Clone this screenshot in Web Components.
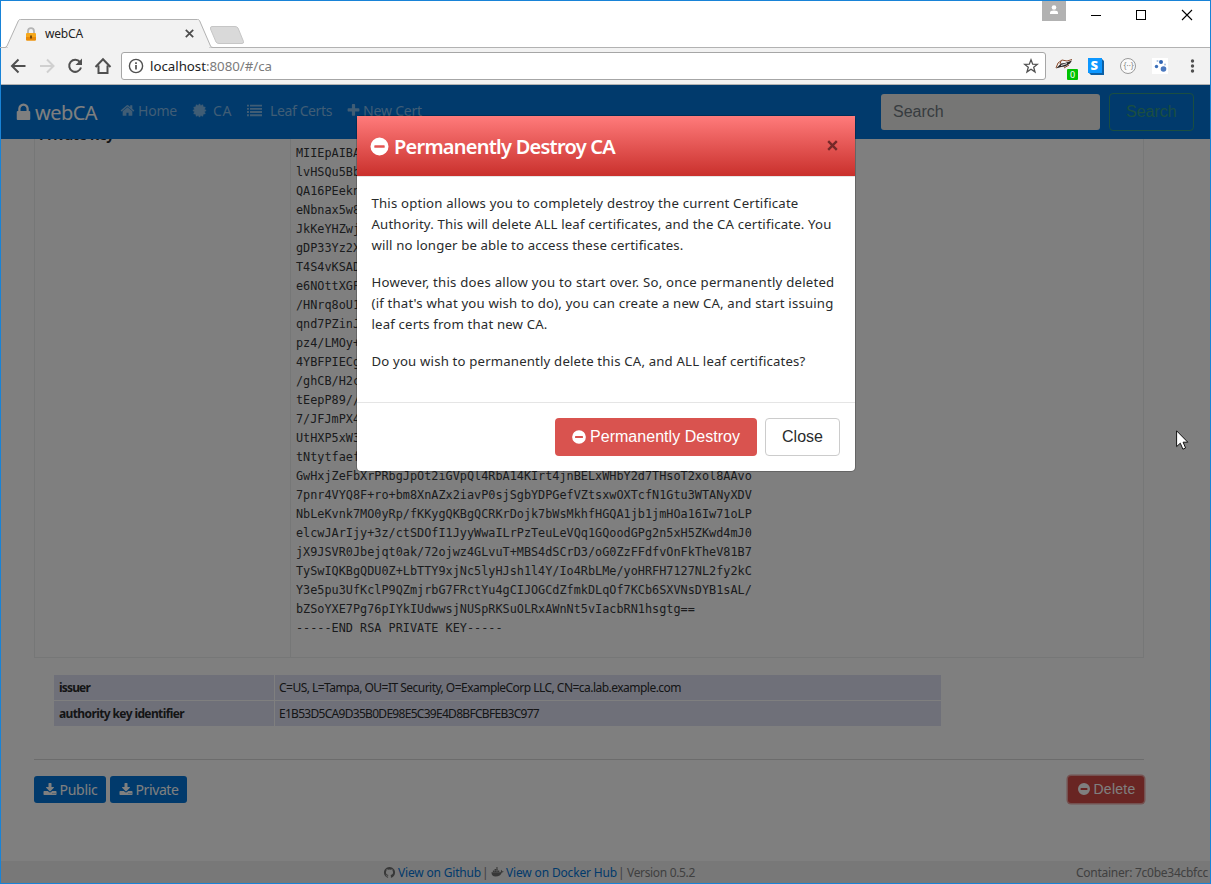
<!DOCTYPE html>
<html lang="en">
<head>
<meta charset="utf-8">
<title>webCA</title>
<style>
html,body{margin:0;height:100%;overflow:hidden;background:#fff}
body{font-family:"Noto Sans","Open Sans",sans-serif;font-size:14px;color:#292b2c}
</style>
</head>
<body>
<browser-window></browser-window>
<script>
const part = (name, html, hook) => customElements.define(name, class extends HTMLElement {
  connectedCallback() {
    if (this.shadowRoot) return;
    const t = document.createElement('template');
    t.innerHTML = html;
    this.attachShadow({mode: 'open'}).append(t.content.cloneNode(true));
    if (hook) hook(this, this.shadowRoot);
  }
});

const burst = (() => {
  let p = [];
  for (let i = 0; i < 24; i++) {
    const a = i * Math.PI / 12, r = i % 2 ? 620 : 800;
    p.push((896 + r * Math.cos(a)).toFixed(0) + ',' + (896 + r * Math.sin(a)).toFixed(0));
  }
  return '<polygon stroke="currentColor" stroke-width="60" stroke-linejoin="round" points="' + p.join(' ') + '"/>';
})();

const ICONS = {
  home: '<path d="M1472 992v480q0 26-19 45t-45 19h-384v-384h-256v384h-384q-26 0-45-19t-19-45v-480q0-1 .5-3t.5-3l575-474 575 474q1 2 1 6zm223-69l-62 74q-8 9-21 11h-3q-13 0-21-7l-692-577-692 577q-12 8-24 7-13-2-21-11l-62-74q-8-10-7-23.5t11-21.5l719-599q32-26 76-26t76 26l244 204v-195q0-14 9-23t23-9h192q14 0 23 9t9 23v408l219 182q10 8 11 21.5t-7 23.5z"/>',
  lock: '<path d="M640 768h512v-192q0-106-75-181t-181-75-181 75-75 181v192zm832 96v576q0 40-28 68t-68 28h-960q-40 0-68-28t-28-68v-576q0-40 28-68t68-28h32v-192q0-184 132-316t316-132 316 132 132 316v192h32q40 0 68 28t28 68z"/>',
  plus: '<path d="M1600 736v192q0 40-28 68t-68 28h-416v416q0 40-28 68t-68 28h-192q-40 0-68-28t-28-68v-416h-416q-40 0-68-28t-28-68v-192q0-40 28-68t68-28h416v-416q0-40 28-68t68-28h192q40 0 68 28t28 68v416h416q40 0 68 28t28 68z"/>',
  minus: '<path fill-rule="evenodd" d="M896 128a768 768 0 1 0 0 1536a768 768 0 1 0 0-1536zM512 780h768q60 0 60 60v112q0 60-60 60h-768q-60 0-60-60v-112q0-60 60-60z"/>',
  download: '<path d="M1344 1344q0-26-19-45t-45-19-45 19-19 45 19 45 45 19 45-19 19-45zm256 0q0-26-19-45t-45-19-45 19-19 45 19 45 45 19 45-19 19-45zm128-224v320q0 40-28 68t-68 28h-1472q-40 0-68-28t-28-68v-320q0-40 28-68t68-28h465l135 136q58 56 136 56t136-56l136-136h464q40 0 68 28t28 68zm-325-569q17 41-14 70l-448 448q-18 19-45 19t-45-19l-448-448q-31-29-14-70 17-39 59-39h256v-448q0-26 19-45t45-19h256q26 0 45 19t19 45v448h256q42 0 59 39z"/>',
  github: '<path d="M896 128q209 0 385.5 103t279.5 279.5 103 385.5q0 251-146.5 451.5t-378.5 277.5q-27 5-40-7t-13-30q0-3 .5-76.5t.5-134.5q0-97-52-142 57-6 102.5-18t94-39 81-66.5 53-105 20.5-150.5q0-119-79-206 37-91-8-204-28-9-81 11t-92 44l-38 24q-93-26-192-26t-192 26q-16-11-42.5-27t-83.5-38.5-85-13.5q-45 113-8 204-79 87-79 206 0 85 20.5 150t52.5 105 80.5 67 94 39 102.5 18q-39 36-49 103-21 10-45 15t-57 5-65.5-21.5-55.5-62.5q-19-32-48.5-52t-49.5-24l-20-3q-21 0-29 4.5t-5 11.5 9 14 13 12l7 5q22 10 43.5 38t31.5 51l10 23q13 38 44 61.5t67 30 69.5 7 55.5-3.5l23-4q0 38 .5 88.5t.5 54.5q0 18-13 30t-40 7q-232-77-378.5-277.5t-146.5-451.5q0-209 103-385.5t279.5-279.5 385.5-103z"/>',
  docker: '<path d="M60 850H1300q90-40 60-190q-10-70 50-130q110 80 110 190q150-40 240 40q-80 150-270 150q-180 540-850 540Q80 1450 60 850zM260 620h200v190H260zM490 620h200v190H490zM720 620h200v190H720zM950 620h200v190H950zM490 400h200v190H490zM720 400h200v190H720zM720 180h200v190H720z"/>',
  cert: burst,
  list: [200, 584, 968, 1352].map(y => `<path d="M0 ${y}h230v220H0zM360 ${y}h1432v220H360z"/>`).join('')
};

part('browser-window', `
<style>
:host{display:flex;flex-direction:column;box-sizing:border-box;width:1211px;height:884px;border:1px solid #1883d7;background:#fff;position:relative}
browser-page{flex:1;min-height:0}
.cursor{position:absolute;left:1175px;top:429px}
</style>
<tab-strip></tab-strip><tool-bar></tool-bar><browser-page></browser-page>
<svg class="cursor" width="14" height="21"><path d="M.6 .8V16.6L4.3 13.2L6.9 19.2L9.6 18L7.1 12.2H11.8Z" fill="#fff" stroke="#111" stroke-width="1"/></svg>`);

part('tab-strip', `
<style>
:host{display:flex;height:47px;box-sizing:border-box;border-bottom:1px solid #b2b2b2;position:relative;color:#222}
.shape{position:absolute;left:-1px;top:0}
.tab{display:flex;align-items:center;height:27px;margin-top:19px;padding-left:24px;width:180px;font-size:12px;position:relative}
.tab fit-text{margin:0 102px 0 8px}
.win{position:relative;margin-left:auto}
</style>
<svg class="shape" width="250" height="47"><path d="M0 46.5H4.5Q6 46.5 7 45L18.5 19.5Q19 18.5 20.5 18.5H197.5Q199 18.5 199.500 19.500L210.500 45Q211 46.500 213 46.500" fill="#f2f2f2" stroke="#b2b2b2"/><path d="M8 46.500H209" stroke="#f2f2f2"/><path d="M212 25.500H235Q237 25.500 238 27L243.500 40.500Q244 42.500 242 42.500H219Q217 42.500 216 41L210.500 28Q210 25.500 212 25.500Z" fill="#d9d9d9" stroke="#c6c6c6"/></svg>
<div class="tab">
<svg width="12" height="14"><path d="M3 7V4.200a3 3 0 0 1 6 0V7" fill="none" stroke="#b4b4b4" stroke-width="1.800"/><rect x="1" y="6" width="10" height="7.500" rx="1" fill="#f6a81c"/><path d="M1 10h10v2.500q0 1-1 1H2q-1 0-1-1z" fill="#e98b0b"/><path d="M5.200 8.500h1.600v3H5.200z" fill="#5a3705"/></svg>
<fit-text w="38">webCA</fit-text>
<svg width="9" height="9"><path d="M.8 .8L8.200 8.200M8.200 .8L.8 8.200" stroke="#4c4c4c" stroke-width="1.700"/></svg>
</div>
<svg class="win" width="168" height="46"><rect width="24" height="20" fill="#b2b2b2"/><circle cx="12" cy="6.500" r="2.300" fill="#fff"/><path d="M8 13V11.500Q8 9.500 12 9.500T16 11.500V13Z" fill="#fff"/><path d="M49 14.500h10" stroke="#000"/><rect x="94.500" y="9.500" width="9" height="9" fill="none" stroke="#000"/><path d="M140 9L150 19M150 9L140 19" stroke="#000" stroke-width="1.100"/></svg>`);

part('tool-bar', `
<style>
:host{display:flex;align-items:center;height:37px;box-sizing:border-box;background:#f2f2f2;border-bottom:1px solid #b2b2b2;padding-left:8px}
.nav{display:flex;gap:8px;width:112px}
.url{display:flex;align-items:center;box-sizing:border-box;width:925px;height:28px;border:1px solid #a6a6a6;border-radius:3px;background:#fff;padding:0 6px;font-size:13.300px;color:#222}
.url svg:last-child{margin-left:auto}
.url .i{margin-right:6px}
.rest{color:#7b7b7b}
.ext{display:flex;align-items:center;margin-left:9px}
</style>
<div class="nav">
<svg width="20" height="20" fill="none" stroke="#505050" stroke-width="2"><path d="M16.500 10H3.500M9.500 3.500L3 10L9.500 16.500"/></svg>
<svg width="20" height="20" fill="none" stroke="#d0d0d0" stroke-width="2"><path d="M3 10H16M10 3.500L16.500 10L10 16.500"/></svg>
<svg width="20" height="20"><path d="M15 6.200A6 6 0 1 0 16 11.500" fill="none" stroke="#505050" stroke-width="2"/><path d="M17 2.500V9H10.500Z" fill="#505050"/></svg>
<svg width="20" height="20" fill="none" stroke="#505050" stroke-width="2"><path d="M2.500 11L10 3.300L17.500 11M5.500 9.500V17H14.500V9.500"/></svg>
</div>
<div class="url">
<svg class="i" width="16" height="16"><circle cx="8" cy="8" r="6.600" fill="none" stroke="#505050" stroke-width="1.400"/><path d="M8 7v4.500M8 4.300v1.600" stroke="#505050" stroke-width="1.700"/></svg>
<fit-text w="56">localhost</fit-text><fit-text class="rest" w="66">:8080/#/ca</fit-text>
<svg width="16" height="16"><path d="M8 1.800L9.700 6.200L14.300 6.400L10.700 9.300L12 13.900L8 11.300L4 13.900L5.300 9.300L1.700 6.400L6.300 6.200Z" fill="none" stroke="#505050" stroke-width="1.300"/></svg>
</div>
<div class="ext">
<svg width="155" height="36"><path d="M1 20.500L6 15.500L10 15L17 12.500L15 15.500L10 18.500L6 19Z" fill="#292422"/><path d="M1 20L3 15L7 12L12 13L17 11.500M6 13L5 16M9 20L14 17" stroke="#8a4a2a" stroke-width="1" fill="none"/><path d="M6 17.500L12 15.500" stroke="#ddd" stroke-width="1.200"/><rect x="12" y="21" width="11" height="11" rx="1" fill="#00c300"/><text x="15" y="30" font-size="9" font-family="Noto Sans" fill="#fff">0</text>
<path d="M34 25l2 2h13V13l-2-2z" fill="#0c60a6"/><rect x="33" y="10" width="14" height="15" fill="#0d97ff"/><text x="35.500" y="22" font-size="13" font-weight="800" font-family="Open Sans" fill="#fff">S</text>
<circle cx="73" cy="18" r="7.500" fill="#fafafa" stroke="#9a9a9a"/><text x="68.500" y="21" font-size="8" font-family="Noto Sans" fill="#888">{··}</text>
<rect x="97" y="10" width="16" height="16" fill="#fff"/><circle cx="106" cy="14" r="2" fill="#3064b3"/><circle cx="101.500" cy="18.500" r="1.700" fill="#3b70ba"/><circle cx="108.500" cy="21" r="2.800" fill="#4a78bf"/><circle cx="102.500" cy="13" r="1" fill="#a5bfe0"/><circle cx="110" cy="16.500" r="1" fill="#a5bfe0"/>
<g fill="#505050"><circle cx="137.500" cy="13" r="1.700"/><circle cx="137.500" cy="18" r="1.700"/><circle cx="137.500" cy="23" r="1.700"/></g></svg>
</div>`);

part('browser-page', `
<style>
:host{display:flex;flex-direction:column;position:relative;overflow:hidden;background:#fff}
ca-details{flex:1;min-height:0}
confirm-dialog{position:absolute;inset:0}
</style>
<nav-bar></nav-bar><ca-details></ca-details><page-footer></page-footer><confirm-dialog></confirm-dialog>`);

part('nav-bar', `
<style>
:host{display:flex;align-items:center;box-sizing:border-box;height:54px;background:#0275d8;padding-left:12px;color:#fff;flex:none}
.brand{font-size:20px;margin-right:23px}
.brand fit-text{margin-left:1px}
a{color:#81baeb;display:flex;align-items:center;padding-bottom:3px}
.brand{color:#fff;padding:0}
.in,.btn{font:16px/24px "Liberation Sans",sans-serif;box-sizing:border-box}
.in{margin-left:auto;width:219px;height:36px;padding:6px 12px;border-radius:3px;background:#ededea;color:#6f7880;}
.btn{width:85px;height:38px;margin:0 16px 0 9px;padding:6px 16px;border:1px solid #349c84;border-radius:4px;color:#349c84}
</style>
<a class="brand"><app-icon name="lock" size="21"></app-icon><fit-text w="62">webCA</fit-text></a>
<a><app-icon name="home" size="15"></app-icon><fit-text w="39" style="margin:0 15px 0 3px">Home</fit-text></a>
<a><app-icon name="cert" size="15"></app-icon><fit-text w="19" style="margin:0 15px 0 6px">CA</fit-text></a>
<a><app-icon name="list" size="15"></app-icon><fit-text w="62" style="margin:0 14px 0 8px">Leaf Certs</fit-text></a>
<a><app-icon name="plus" size="15"></app-icon><fit-text w="59" style="margin-left:2px">New Cert</fit-text></a>
<div class="in">Search</div><div class="btn">Search</div>`);

part('ca-details', `
<style>
:host{display:block;padding:0 65px 0 33px;overflow:hidden}
.row{display:grid;grid-template-columns:255px 1fr;box-sizing:border-box;width:1110px;height:519px;border:1px solid #eceeef;border-top:0}
.k{font-weight:bold;line-height:20px;padding-left:4px}
.k fit-text{margin-top:-14px}
.pem{padding:5px;border-left:1px solid #eceeef;font:11.840px/19px "DejaVu Sans Mono",monospace;color:#35373a}
.pem div{width:max-content}
.kv{display:grid;grid-template-columns:220px 666px;gap:1px;margin:17px 0 0 20px;width:888px;font-size:12px;line-height:25px}
.kv div{background:#dfe0f2;padding-left:5px;height:25px}
.kv div:nth-child(even){box-sizing:border-box;padding-left:4px}
.kv b{display:block}
hr{margin:33px 0 0;width:1110px;border:0;border-top:1px solid #d9d9d9}
.bar{display:flex;gap:4px;margin-top:16px;width:1110px}
.bar act-button:last-child{margin-left:auto}
</style>
<div class="row"><div class="k"><fit-text w="75">Private Key</fit-text></div><div class="pem"></div></div>
<div class="kv"><div><b><fit-text w="31">issuer</fit-text></b></div><div><fit-text w="402">C=US, L=Tampa, OU=IT Security, O=ExampleCorp LLC, CN=ca.lab.example.com</fit-text></div>
<div><b><fit-text w="125">authority key identifier</fit-text></b></div><div><fit-text w="260">E1B53D5CA9D35B0DE98E5C39E4D8BFCBFEB3C977</fit-text></div></div>
<hr>
<div class="bar"><act-button icon="download" style="width:72px"><fit-text w="38">Public</fit-text></act-button><act-button icon="download" style="width:77px"><fit-text w="43">Private</fit-text></act-button><act-button icon="minus" class="danger" style="width:76px"><fit-text w="42">Delete</fit-text></act-button></div>`,
(el, root) => {
  const pem = root.querySelector('.pem');
  `MIIEpAIBA
lvHSQu5Bb
QA16PEekn
eNbnax5w8
JkKeYHZwj
gDP33Yz2X
T4S4vKSAD
e6NOttXGP
/HNrq8oU1
qnd7PZinJ
pz4/LMOy+
4YBFPIECg
/ghCB/H2c
tEepP89//
7/JFJmPX4
UtHXP5xW3
tNtytfaef
GwHxjZeFbXrPRbgJpOt2iGVpQl4RbA14KIrt4jnBELxWHbY2d7THsoT2xol8AAvo
7pnr4VYQ8F+ro+bm8XnAZx2iavP0sjSgbYDPGefVZtsxwOXTcfN1Gtu3WTANyXDV
NbLeKvnk7MO0yRp/fKKygQKBgQCRKrDojk7bWsMkhfHGQA1jb1jmHOa16Iw71oLP
elcwJArIjy+3z/ctSDOfI1JyyWwaILrPzTeuLeVQq1GQoodGPg2n5xH5ZKwd4mJ0
jX9JSVR0Jbejqt0ak/72ojwz4GLvuT+MBS4dSCrD3/oG0ZzFFdfvOnFkTheV81B7
TySwIQKBgQDU0Z+LbTTY9xjNc5lyHJsh1l4Y/Io4RbLMe/yoHRFH7127NL2fy2kC
Y3e5pu3UfKclP9QZmjrbG7FRctYu4gCIJOGCdZfmkDLqOf7KCb6SXVNsDYB1sAL/
bZSoYXE7Pg76pIYkIUdwwsjNUSpRKSuOLRxAWnNt5vIacbRN1hsgtg==
-----END RSA PRIVATE KEY-----`.split('\n').forEach(line => {
    const d = document.createElement('div');
    d.textContent = line;
    pem.append(d);
  });
});

part('act-button', `
<style>
:host{display:flex;align-items:center;justify-content:center;gap:3px;height:27px;border-radius:3px;background:#0275d8;color:#fff;line-height:20px;flex:none;box-sizing:border-box}
:host(.danger){background:#d9534f;font-family:"Liberation Sans",sans-serif}
:host(.danger:not(.lg)){background:#d34a46;box-shadow:0 0 0 1.500px #e8a3a1;padding-bottom:1px}
:host(.lg){height:38px;font-size:16px;border-radius:4px;padding-right:1px}
</style>
<app-icon></app-icon><slot></slot>`, (el, root) => {
  const i = root.querySelector('app-icon');
  i.setAttribute('name', el.getAttribute('icon'));
  i.setAttribute('size', el.classList.contains('lg') ? 16 : 14);
});

part('page-footer', `
<style>
:host{display:flex;align-items:center;height:22px;background:#f0f0f0;color:#818181;font-size:12px;flex:none;padding:0 2px 0 382px}
a{color:#0275d8}
.r{margin-left:auto}
app-icon{color:#707070}
</style>
<app-icon name="github" size="13"></app-icon><a><fit-text w="83" style="margin-left:2px">View on Github</fit-text></a><fit-text w="5" style="margin:0 4px 0 1px">|</fit-text>
<app-icon name="docker" size="13"></app-icon><a><fit-text w="111" style="margin-left:2px">View on Docker Hub</fit-text></a><fit-text w="5" style="margin:0 4px 0 1px">|</fit-text><fit-text w="68">Version 0.5.2</fit-text>
<fit-text class="r" w="132">Container: 7c0be34cbfcc</fit-text>`);

part('confirm-dialog', `
<style>
:host{display:block;background:rgba(0,0,0,.5)}
.box{margin:30px 0 0 355px;width:498px;height:355px;border:1px solid rgba(0,0,0,.2);border-radius:5px;background:#fff;background-clip:padding-box;display:flex;flex-direction:column}
header{display:flex;align-items:center;box-sizing:border-box;height:61px;padding:0 17px 0 12px;background:linear-gradient(#ff7b7b,#c9302c 60px);color:#fff;font:600 20px "Noto Sans","Open Sans",sans-serif;border-bottom:1px solid #e5e5e5}
header fit-text{margin-left:4px}
header svg{margin:0 0 2px auto}
section{flex:1;padding:16px 15px 0 14.500px;line-height:21px;font-size:13.200px}
p{margin:0 0 16px}
footer{display:flex;gap:8px;justify-content:flex-end;border-top:1px solid #e5e5e5;padding:15px}
.close{box-sizing:border-box;width:75px;height:38px;border:1px solid #ccc;border-radius:4px;font:16px/36px "Liberation Sans",sans-serif;text-align:center}
</style>
<div class="box">
<header><app-icon name="minus" size="21"></app-icon><fit-text w="221">Permanently Destroy CA</fit-text><svg width="11" height="11"><path d="M1.200 1.200L9.800 9.800M9.800 1.200L1.200 9.800" stroke="#752828" stroke-width="2.400"/></svg></header>
<section>
<p><fit-text w="427">This option allows you to completely destroy the current Certificate</fit-text><fit-text w="460">Authority. This will delete ALL leaf certificates, and the CA certificate. You</fit-text><fit-text w="312">will no longer be able to access these certificates.</fit-text></p>
<p><fit-text w="463">However, this does allow you to start over. So, once permanently deleted</fit-text><fit-text w="462">(if that's what you wish to do), you can create a new CA, and start issuing</fit-text><fit-text w="176">leaf certs from that new CA.</fit-text></p>
<p><fit-text w="434">Do you wish to permanently delete this CA, and ALL leaf certificates?</fit-text></p>
</section>
<footer><act-button class="danger lg" icon="minus" style="width:202px"><fit-text w="150">Permanently Destroy</fit-text></act-button><div class="close">Close</div></footer>
</div>`);

part('app-icon', `<style>:host{display:inline-flex;flex:none}svg{display:block}</style><svg viewBox="0 0 1792 1792" fill="currentColor"></svg>`, (el, root) => {
  const s = root.querySelector('svg'), n = el.getAttribute('size');
  s.setAttribute('width', n);
  s.setAttribute('height', n);
  s.innerHTML = ICONS[el.getAttribute('name')];
});

/* A single line of text, tracked so that it spans the width given in "w". */
part('fit-text', `<style>:host{display:block;white-space:nowrap;flex:none}span{display:inline-block}</style><span><slot></slot></span>`, (el, root) => {
  const span = root.querySelector('span'), w = +el.getAttribute('w');
  const natural = span.getBoundingClientRect().width;
  span.style.letterSpacing = ((w - natural) / el.textContent.length).toFixed(3) + 'px';
  el.style.width = w + 'px';
});
</script>
</body>
</html>
